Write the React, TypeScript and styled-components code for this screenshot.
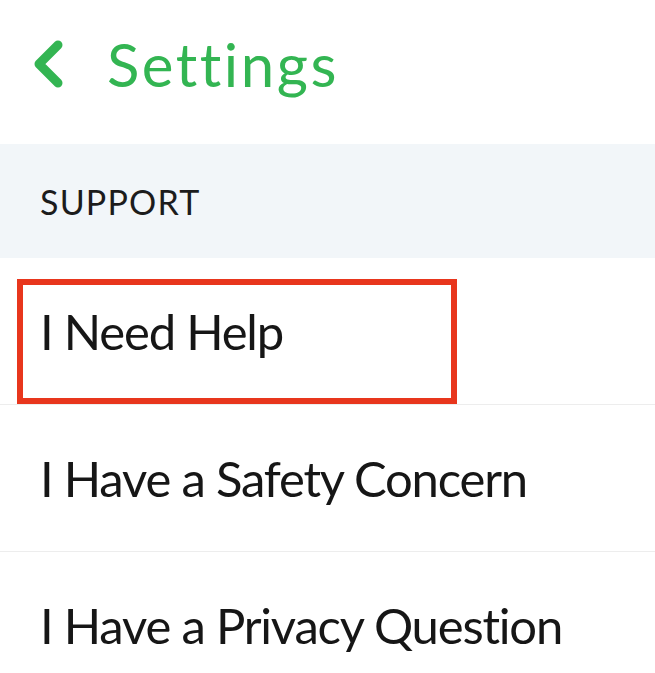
import styled, { createGlobalStyle } from 'styled-components';

const GlobalStyle = createGlobalStyle`
  html, body {
    margin: 0;
    padding: 0;
    background: #ffffff;
  }
  body {
    font-family: Lato, 'Open Sans', sans-serif;
    overflow: hidden;
  }
`;

const Page = styled.div`
  width: 655px;
  display: flex;
  flex-direction: column;
`;

const Header = styled.header`
  height: 144px;
  display: flex;
  align-items: center;
  gap: 44px;
  padding: 0 0 16px 33px;
  box-sizing: border-box;
`;

const BackButton = styled.button`
  border: none;
  background: none;
  padding: 0;
  display: flex;
  cursor: pointer;
`;

const Title = styled.h1`
  margin: 0;
  font-size: 60px;
  font-weight: 400;
  color: #33b552;
  line-height: 1;
  letter-spacing: 2.5px;
`;

const SectionHeader = styled.div`
  height: 114px;
  background: #f2f6f9;
  display: flex;
  align-items: center;
  padding-left: 40px;
  font-size: 34px;
  color: #1c1c1c;
  letter-spacing: 1.2px;
`;

const Row = styled.div`
  position: relative;
  height: 146px;
  display: flex;
  align-items: center;
  padding-left: 40px;
  border-bottom: 1px solid #ededed;
  font-size: 49px;
  color: #161616;
  letter-spacing: -1.2px;
`;

const Highlight = styled.div`
  position: absolute;
  left: 17px;
  top: 21px;
  width: 440px;
  height: 125px;
  border: 6px solid #e8361d;
  box-sizing: border-box;
`;

function BackChevron() {
  return (
    <svg width="30" height="48" viewBox="0 0 30 48">
      <path
        d="M25 5 L6 24 L25 43"
        fill="none"
        stroke="#33b552"
        strokeWidth="9"
        strokeLinecap="round"
        strokeLinejoin="round"
      />
    </svg>
  );
}

const items = [
  { label: 'I Need Help', marked: true },
  { label: 'I Have a Safety Concern' },
  { label: 'I Have a Privacy Question' },
];

export default function App() {
  return (
    <>
      <GlobalStyle />
      <Page>
        <Header>
          <BackButton aria-label="Back">
            <BackChevron />
          </BackButton>
          <Title>Settings</Title>
        </Header>
        <SectionHeader>SUPPORT</SectionHeader>
        {items.map((item) => (
          <Row key={item.label}>
            {item.label}
            {item.marked && <Highlight />}
          </Row>
        ))}
      </Page>
    </>
  );
}
